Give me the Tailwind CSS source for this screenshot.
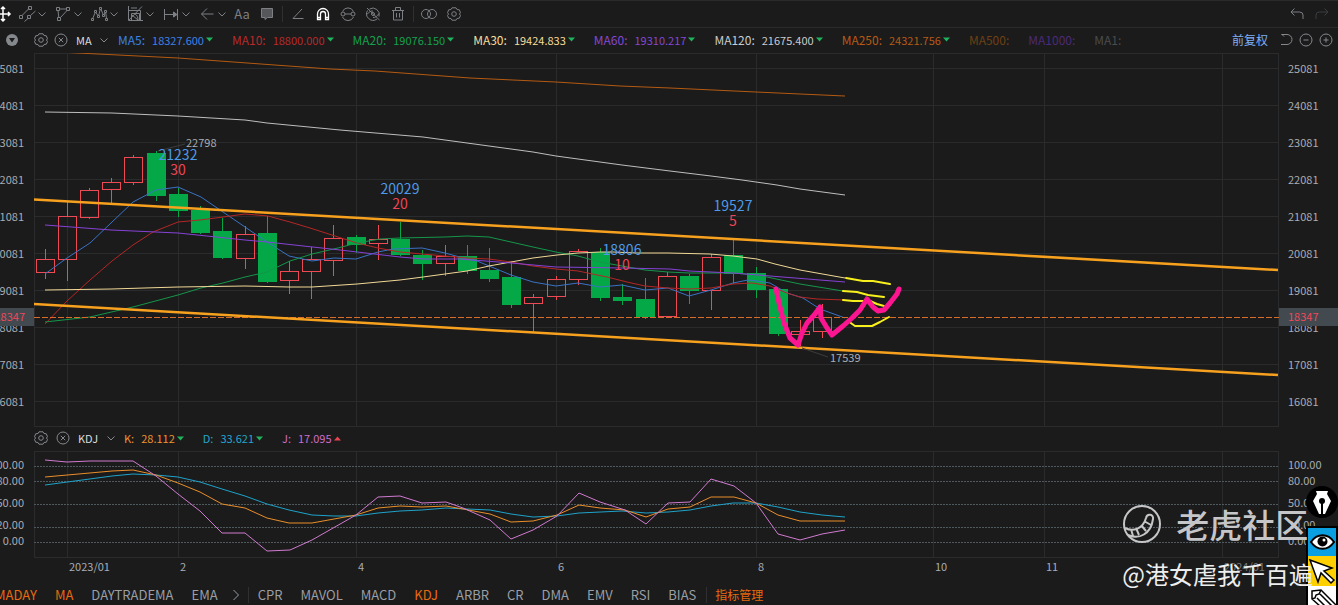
<!DOCTYPE html>
<html lang="zh-CN">
 <head>
  <meta charset="utf-8"/>
  <meta content="width=device-width, initial-scale=1.0" name="viewport"/>
  <title>K线图</title>
  <script src="https://cdn.jsdelivr.net/npm/@tailwindcss/browser@4"></script>
 </head>
 <body class="bg-[#1b1b1b] text-[#a8adb5] font-['Noto_Sans_CJK_SC','Open_Sans',sans-serif] text-[11px] leading-4">
  <!-- Shared icons -->
  <svg class="hidden">
   <symbol id="chev" viewBox="0 0 8 8"><path d="M.5 2.500l3.500 3.500 3.500-3.500" fill="none" stroke="currentColor"/></symbol>
   <symbol id="gear" viewBox="0 0 14 14"><g fill="none" stroke="currentColor"><path d="M5 .8h4l1 1.700 2.300.3 1.200 3L12.400 7l1.100 1.500-1.200 2.700-2.300.3-1 1.700H5l-1-1.700-2.300-.3L.5 8.500 1.600 7 .5 5.800l1.200-3L4 2.500z"/><circle cx="7" cy="7" r="2.300"/></g></symbol>
   <symbol id="close" viewBox="0 0 14 14"><g fill="none" stroke="currentColor"><circle cx="7" cy="7" r="6"/><path d="M4.800 4.800l4.400 4.400M9.200 4.800L4.800 9.200"/></g></symbol>
   <symbol id="down" viewBox="0 0 7 5"><path d="M0 0.500h7L3.500 4.500z" fill="#1fb45c"/></symbol>
   <symbol id="up" viewBox="0 0 7 5"><path d="M0 4.500h7L3.500.5z" fill="#e8434f"/></symbol>
  </svg>

  <div class="relative overflow-hidden">
   <!-- Toolbar -->
   <header class="flex h-7 items-center border-y border-[#2b2b2b] text-[#7c7f84]">
    <div class="-ml-[7px] flex items-center gap-[5px]">
     <button aria-label="移动" class="text-white"><svg class="h-5 w-5" viewBox="0 0 20 20" fill="none" stroke="currentColor" stroke-width="1.500"><path d="M10 3v14M3 10h14M8 5l2-2 2 2M8 15l2 2 2-2M15 8l2 2-2 2M5 8l-2 2 2 2"/></svg></button>
     <div class="flex items-center gap-2">
      <button aria-label="趋势线" class="flex items-center"><svg class="h-5 w-5" viewBox="0 0 20 20" fill="none" stroke="currentColor"><path d="M4.500 11l6.500-6.500M6.500 17.500l4-3.500M12.500 11.500l5-4.500M1.500 11.500h3v3h-3zM10.500 2.500h3v3h-3zM9.500 11.500h3v3h-3z"/></svg><svg class="h-2 w-2"><use href="#chev"/></svg></button>
      <button aria-label="图形" class="flex items-center"><svg class="h-5 w-5" viewBox="0 0 20 20" fill="none" stroke="currentColor"><path d="M2.500 3.500h3v3h-3zM12.500 3.500h3v3h-3zM3.500 13.500h3v3h-3zM5.500 5h7M4 6.500l.8 7M6.500 13.500l6.500-7"/></svg><svg class="h-2 w-2"><use href="#chev"/></svg></button>
      <button aria-label="波浪" class="flex items-center"><svg class="h-5 w-5" viewBox="0 0 20 20" fill="none" stroke="currentColor"><path d="M1.500 14.500h2v2h-2zM4.500 6.500h2v2h-2zM7.500 11.500h2v2h-2zM9.500 3.500h2v2h-2zM12.500 10.500h2v2h-2zM14.500 6.500h2v2h-2zM15.500 14.500h2v2h-2zM2.700 14.500l2.500-6M5.800 8.500l2.200 3M8.700 11.500l1.500-6M11 5.500l2.200 5M14 10.500l1.200-2M15.700 8.500l.8 6"/></svg><svg class="h-2 w-2"><use href="#chev"/></svg></button>
      <button aria-label="江恩" class="flex items-center"><svg class="h-5 w-5" viewBox="0 0 20 20" fill="none" stroke="currentColor"><path d="M2.500 2v14.500H17M5.500 9.500h8v7h-8zM3 16L16 2.500M3 6.500h11.500v10M5 4h6M9 10c2 1 3 3 3 6M6 11l6 5"/></svg><svg class="h-2 w-2"><use href="#chev"/></svg></button>
      <button aria-label="测量" class="flex items-center"><svg class="h-5 w-5" viewBox="0 0 20 20" fill="none" stroke="currentColor"><path d="M2.500 5v11M15.500 5v11M2.500 10.500h12"/><path d="M11.500 8v5l3.500-2.500z" fill="currentColor"/></svg><svg class="h-2 w-2"><use href="#chev"/></svg></button>
      <button aria-label="箭头" class="flex items-center"><svg class="h-5 w-5" viewBox="0 0 20 20" fill="none" stroke="currentColor"><path d="M3.500 10h12M9 4.500L3.500 10 9 15.500"/></svg><svg class="h-2 w-2"><use href="#chev"/></svg></button>
     </div>
    </div>
    <div class="ml-[6px] flex items-center gap-[5px]">
     <button class="w-5 text-[13px]">Aa</button>
     <button aria-label="批注"><svg class="block h-5 w-5" viewBox="0 0 20 20"><path d="M4.500 4.500h11v9h-5l-2.500 2v-2h-3.500z" fill="#55575b" stroke="currentColor"/></svg></button>
     <span class="h-4 w-px bg-[#303030]"></span>
     <button aria-label="角度"><svg class="block h-5 w-5" viewBox="0 0 20 20" fill="none" stroke="currentColor"><path d="M14 5L5 14.500h10.500"/></svg></button>
     <button aria-label="磁吸" class="text-white"><svg class="block h-5 w-5" viewBox="0 0 20 20" fill="none" stroke="currentColor" stroke-width="1.300"><path d="M4.500 15.500V10a5.500 5.500 0 0 1 11 0v5.500h-3V10a2.500 2.500 0 0 0-5 0v5.500zM4.500 13.500h3M12.500 13.500h3"/></svg></button>
     <button aria-label="连续绘制"><svg class="block h-5 w-5" viewBox="0 0 20 20" fill="none" stroke="currentColor"><path d="M4.500 7.500a6 6 0 0 1 11 0M4.500 13a6 6 0 0 0 11 0M7 10h6"/><circle cx="5" cy="10" r="2"/><circle cx="15" cy="10" r="2"/></svg></button>
     <button aria-label="隐藏绘图"><svg class="block h-5 w-5" viewBox="0 0 20 20" fill="none" stroke="currentColor"><path d="M6.500 5A6.500 6.500 0 0 1 16 12.500M4.500 6.500a6.500 6.500 0 0 0 9.500 8.500M4 10.500c2-3 4-3.500 6-3.500M16 9.500c-2 3-3.500 4-6 4M4 4l12.500 12"/><circle cx="10" cy="10" r="1.500"/></svg></button>
     <button aria-label="删除"><svg class="block h-5 w-5" viewBox="0 0 20 20" fill="none" stroke="currentColor"><path d="M4 6.500h12M7.500 6V3.500h5V6M5.500 6.500v9.500h9V6.500M8.500 9v4.500M11.500 9v4.500"/></svg></button>
     <span class="h-4 w-px bg-[#303030]"></span>
     <button aria-label="对比"><svg class="block h-5 w-5" viewBox="0 0 20 20" fill="none" stroke="currentColor"><circle cx="7" cy="10" r="4.500"/><circle cx="13" cy="10" r="4.500"/></svg></button>
     <button aria-label="设置" class="flex w-5 justify-center"><svg class="h-[14px] w-[14px]"><use href="#gear"/></svg></button>
    </div>
    <div class="ml-auto flex gap-1.5 pr-[5px]">
     <button aria-label="撤销"><svg class="block h-5 w-5" viewBox="0 0 20 20" fill="none" stroke="currentColor"><path d="M7.500 4.500L4 8l3.500 3.500M4 8h8.500q3.500 0 3.500 3v4"/></svg></button>
     <button aria-label="重做" class="text-[#3b3d40]"><svg class="block h-5 w-5" viewBox="0 0 20 20" fill="none" stroke="currentColor"><path d="M11.500 4.500L15 8l-3.500 3.500M15 8H6.500Q3 8 3 11v4"/></svg></button>
    </div>
   </header>

   <!-- MA legend -->
   <section class="flex h-[25px] items-center whitespace-nowrap px-[5px] pb-0.5">
    <button aria-label="收起"><svg class="block h-[14px] w-[14px]" viewBox="0 0 14 14"><circle cx="7" cy="7" r="6" fill="#85888d"/><path d="M4 5h6L7 9.500z" fill="#1b1b1b"/></svg></button>
    <button aria-label="指标设置" class="ml-[15px] text-[#85888d]"><svg class="block h-[14px] w-[14px]"><use href="#gear"/></svg></button>
    <button aria-label="关闭指标" class="ml-[6px] text-[#85888d]"><svg class="block h-[14px] w-[14px]"><use href="#close"/></svg></button>
    <select aria-label="主图指标" class="ml-2 w-6 appearance-none text-[11px] text-[#dcdcdc]"><option>MA</option></select>
    <svg class="h-2 w-2 text-[#85888d]"><use href="#chev"/></svg>
    <div class="ml-[10px] flex gap-[19px]">
     <div class="flex items-center text-[#3b82e6]"><span class="text-xs">MA5:</span><span class="ml-[7px] mr-0.5">18327.600</span><svg class="h-[5px] w-[7px]"><use href="#down"/></svg></div>
     <div class="flex items-center text-[#b82a2a]"><span class="text-xs">MA10:</span><span class="ml-[7px] mr-0.5">18800.000</span><svg class="h-[5px] w-[7px]"><use href="#down"/></svg></div>
     <div class="flex items-center text-[#14a04e]"><span class="text-xs">MA20:</span><span class="ml-[7px] mr-0.5">19076.150</span><svg class="h-[5px] w-[7px]"><use href="#down"/></svg></div>
     <div class="flex items-center text-[#f5dd9a]"><span class="text-xs">MA30:</span><span class="ml-[7px] mr-0.5">19424.833</span><svg class="h-[5px] w-[7px]"><use href="#down"/></svg></div>
     <div class="flex items-center text-[#8447d6]"><span class="text-xs">MA60:</span><span class="ml-[7px] mr-0.5">19310.217</span><svg class="h-[5px] w-[7px]"><use href="#down"/></svg></div>
     <div class="flex items-center text-[#c8ccd0]"><span class="text-xs">MA120:</span><span class="ml-[7px] mr-0.5">21675.400</span><svg class="h-[5px] w-[7px]"><use href="#down"/></svg></div>
     <div class="flex items-center text-[#b85a14]"><span class="text-xs">MA250:</span><span class="ml-[7px] mr-0.5">24321.756</span><svg class="h-[5px] w-[7px]"><use href="#down"/></svg></div>
     <span class="text-xs text-[#6e4014]">MA500:</span>
     <span class="text-xs text-[#4c2a78]">MA1000:</span>
     <span class="text-xs text-[#4a4b4d]">MA1:</span>
    </div>
    <a href="#" class="ml-auto text-xs text-[#7fb0f5]">前复权</a>
    <div class="ml-[11px] flex gap-[6px] text-[#85888d]">
     <button aria-label="还原"><svg class="block h-[14px] w-[14px]" viewBox="0 0 14 14" fill="none" stroke="currentColor"><path d="M2.500 1L5 3.500M2.500 1.500H8a5 5 0 0 1 0 10H2"/></svg></button>
     <button aria-label="缩小"><svg class="block h-[14px] w-[14px]" viewBox="0 0 14 14" fill="none" stroke="currentColor"><circle cx="7" cy="7" r="6"/><path d="M4.500 7h5"/></svg></button>
     <button aria-label="放大"><svg class="block h-[14px] w-[14px]" viewBox="0 0 14 14" fill="none" stroke="currentColor"><circle cx="7" cy="7" r="6"/><path d="M4.500 7h5M7 4.500v5"/></svg></button>
    </div>
   </section>

   <!-- Price chart -->
   <main class="relative flex">
    <div class="flex w-[34px] shrink-0 flex-col items-end gap-[21px] pr-[10px] pt-[7px]">
     <span>25081</span><span>24081</span><span>23081</span><span>22081</span><span>21081</span><span>20081</span><span>19081</span><span>18081</span><span>17081</span><span>16081</span>
    </div>
    <svg class="block h-auto min-w-0 flex-1" viewBox="34 53 1245 374" fill="none">
     <g stroke="#2a2b2c" shape-rendering="crispEdges">
      <path d="M34 53.500H1279M34 68.500H1279M34 105.500H1279M34 142.500H1279M34 179.500H1279M34 216.500H1279M34 253.500H1279M34 290.500H1279M34 327.500H1279M34 364.500H1279M34 401.500H1279M34 426.500H1279"/>
      <path d="M34.500 53V427M67.500 53V427M178.500 53V427M356.500 53V427M556.500 53V427M756.500 53V427M933.500 53V427M1044.500 53V427M1222.500 53V427M1278.500 53V427"/>
     </g>
     <g id="candles" shape-rendering="crispEdges"></g>
     <g stroke-linejoin="round">
      <polyline stroke="#b45a12" points="58,52 178,58 330,69 375,71 470,78 556,82 620,86 670,88 756,92 800,94 845,96"/>
      <polyline stroke="#bebebe" points="45,112 112,113 178,116 245,120 267,123 340,130 423,137 533,152 556,156 622,165 670,171 711,176 742,180 777,185 800,189 845,195"/>
      <polyline stroke="#3a72c4" points="45,274 67,258 90,243 111,223 133,202 156,190 178,187 201,197 223,212 245,227 267,242 289,256 312,261 334,258 356,259 378,252 393,249 422,248 445,253 467,259 477,261 511,275 533,282 556,286 578,283 600,287 622,285 645,290 668,288 689,296 711,290 733,283 748,280 757,281 770,283 787,293 803,298 820,309 845,318"/>
      <polyline stroke="#b42626" points="45,324 67,301 90,280 112,261 133,245 153,232 178,222 200,220 223,217 245,214 268,216 290,222 310,228 335,236 357,243 378,248 400,252 422,254 445,256 467,258 489,259 511,262 533,266 556,269 578,271 607,277 627,282 645,286 668,288 689,289 711,288 733,284 752,283 770,286 787,293 800,297 817,299 845,300"/>
      <polyline stroke="#14964a" points="45,322 90,317 133,307 178,295 201,288 223,283 245,277 267,272 290,261 312,254 338,248 357,243 380,239 400,238 445,237 467,236 489,237 511,242 533,247 556,252 578,256 600,262 622,266 645,270 668,272 689,273 733,273 757,275 767,277 800,284 843,291"/>
      <polyline stroke="#f0d896" points="45,290 111,289 178,287 245,286 289,287 312,287 357,284 400,280 423,277 445,274 467,271 489,266 511,262 533,258 557,255 578,253 600,252 613,252 637,253 668,253 710,254 733,256 757,259 775,264 800,270 845,278"/>
      <polyline stroke="#8642d6" points="45,225 111,230 178,233 245,240 267,242 340,250 400,257 423,259 460,259 511,263 556,267 622,268 670,269 689,271 733,273 770,276 845,282"/>
     </g>
     <path d="M34 317.500H1279" stroke="#d86c28" stroke-dasharray="6 2" shape-rendering="crispEdges"/>
     <path d="M34 199.500L1278 270M34 304L1278 375" stroke="#f7a11e" stroke-width="2.500"/>
     <path d="M158 151L185 144M802 348L828 357" stroke="#3a3c3e"/>
     <!-- Count signals -->
     <g font-size="14" text-anchor="middle" fill="#4d9ae8">
      <text x="178" y="160">21232</text><text x="400" y="194">20029</text><text x="622" y="255">18806</text><text x="733" y="211">19527</text>
     </g>
     <g font-size="14" text-anchor="middle" fill="#ef4453">
      <text x="178" y="175">30</text><text x="400" y="209">20</text><text x="622" y="270">10</text><text x="733" y="226">5</text>
     </g>
     <g font-size="11" fill="#a8adb5"><text x="186" y="147">22798</text><text x="830" y="362">17539</text></g>
     <!-- Hand drawn forecast -->
     <g stroke="#f8f01c" stroke-width="2" stroke-linejoin="round" stroke-linecap="round">
      <path d="M846 278L863 281 873 281 890 284M843 291L857 292 868 295 884 297M843 300L853 301 870 301 877 304 884 306M848 321L855 326H872L880 322 889 317"/>
     </g>
     <path d="M776 289L779 303 784 323 790 338 798 345 802 333 807 323 815 314 820 307 821 318 827 328 832 335 843 326 852 318 860 310 867 299 873 307 878 311 884 310 890 303 897 294 899 289" stroke="#fc1591" stroke-width="5" stroke-linejoin="round" stroke-linecap="round"/>
    </svg>
    <div class="flex w-[59px] shrink-0 flex-col gap-[21px] pl-[9px] pt-[7px]">
     <span>25081</span><span>24081</span><span>23081</span><span>22081</span><span>21081</span><span>20081</span><span>19081</span><span>18081</span><span>17081</span><span>16081</span>
    </div>
    <!-- Last price tags -->
    <div class="absolute left-0 top-[255px] flex h-[18px] w-[34px] items-center justify-end bg-[#42494f] pb-0.5 pr-[9px] text-[#f0485a]">18347</div>
    <div class="absolute right-0 top-[255px] flex h-[18px] w-[59px] items-center bg-[#42494f] pb-0.5 pl-[9px] text-[#f0485a]">18347</div>
   </main>

   <!-- KDJ legend -->
   <section class="flex h-6 items-center whitespace-nowrap pb-0.5 pl-[34px]">
    <button aria-label="指标设置" class="text-[#85888d]"><svg class="block h-[14px] w-[14px]"><use href="#gear"/></svg></button>
    <button aria-label="关闭指标" class="ml-2 text-[#85888d]"><svg class="block h-[14px] w-[14px]"><use href="#close"/></svg></button>
    <select aria-label="副图指标" class="ml-2 w-[29px] appearance-none text-[11px] text-[#dcdcdc]"><option>KDJ</option></select>
    <svg class="h-2 w-2 text-[#85888d]"><use href="#chev"/></svg>
    <div class="ml-[9px] flex gap-[19px]">
     <div class="flex items-center text-[#f0932c]"><span>K:</span><span class="ml-[7px] mr-0.5">28.112</span><svg class="h-[5px] w-[7px]"><use href="#down"/></svg></div>
     <div class="flex items-center text-[#22a6cc]"><span>D:</span><span class="ml-[7px] mr-0.5">33.621</span><svg class="h-[5px] w-[7px]"><use href="#down"/></svg></div>
     <div class="flex items-center text-[#cf6cc8]"><span>J:</span><span class="ml-[7px] mr-0.5">17.095</span><svg class="h-[5px] w-[7px]"><use href="#up"/></svg></div>
    </div>
   </section>

   <!-- KDJ chart -->
   <section class="flex">
    <div class="flex w-[34px] shrink-0 flex-col items-end pr-[10px] pt-[5px]">
     <span>100.00</span><span>80.00</span><span class="my-[6px]">50.00</span><span>20.00</span><span>0.00</span>
    </div>
    <svg class="block h-auto min-w-0 flex-1" viewBox="34 451 1245 126" fill="none">
     <path d="M34 451.500H1279M34 557.500H1279M34.500 451V557M67.500 451V557M178.500 451V557M356.500 451V557M556.500 451V557M756.500 451V557M933.500 451V557M1044.500 451V557M1222.500 451V557M1278.500 451V557" stroke="#2a2b2c"/>
     <path d="M34 466.500H1279M34 481.500H1279M34 504.500H1279M34 527.500H1279M34 542.500H1279" stroke="#505a5e" stroke-dasharray="2 1"/>
     <g stroke-linejoin="round">
      <polyline stroke="#1ea2ca" points="45,485 112,476 133,474 156,475 178,477 200,482 222,489 245,496 267,504 289,510 312,515 334,516 356,516 378,513 400,511 422,510 446,508 467,509 490,510 511,514 533,517 557,516 579,513 622,511 646,513 668,512 690,510 711,506 733,503 756,503 778,507 800,512 822,515 845,517"/>
      <polyline stroke="#ea8e2a" points="45,477 112,471 133,470 156,475 178,483 200,492 222,504 245,508 267,518 289,523 312,523 334,519 356,515 378,508 400,506 422,507 446,506 463,509 490,514 511,522 533,521 557,515 579,505 600,508 625,510 646,517 668,509 690,507 711,497 734,497 756,503 778,515 800,521 845,521"/>
      <polyline stroke="#d07ad0" points="45,460 67,462 90,461 133,461 156,476 178,494 200,511 222,533 245,533 267,551 290,550 312,540 356,515 378,497 400,496 422,503 446,502 463,508 490,520 511,539 533,530 557,516 579,493 600,502 625,510 646,524 668,503 690,502 711,479 734,486 756,503 778,534 800,540 822,534 845,530"/>
     </g>
     <g font-size="11" fill="#a8adb5">
      <text x="69" y="571">2023/01</text><text x="180" y="571">2</text><text x="358" y="571">4</text><text x="558" y="571">6</text><text x="758" y="571">8</text><text x="935" y="571">10</text><text x="1046" y="571">11</text><text x="1224" y="571" fill="#74777b">2024/01</text>
     </g>
    </svg>
    <div class="flex w-[59px] shrink-0 flex-col pl-[9px] pt-[5px]">
     <span>100.00</span><span>80.00</span><span class="my-[6px]">50.00</span><span>20.00</span><span>0.00</span>
    </div>
   </section>

   <!-- Indicator tabs -->
   <nav class="mt-[8px] flex h-5 items-center gap-[18px] whitespace-nowrap text-[13px] text-[#9a9ea5]">
    <button class="-ml-[5px] text-[#e8690f]">MADAY</button>
    <button class="text-[#e8690f]">MA</button>
    <button>DAYTRADEMA</button>
    <button>EMA</button>
    <div class="-ml-1 flex items-center gap-2"><button aria-label="更多"><svg class="block h-3 w-2" viewBox="0 0 8 12" fill="none" stroke="currentColor"><path d="M1.500 1l5 5-5 5"/></svg></button><span class="h-4 w-px bg-[#303030]"></span></div>
    <button class="-ml-[9px]">CPR</button>
    <button>MAVOL</button>
    <button>MACD</button>
    <button class="text-[#e8690f]">KDJ</button>
    <button>ARBR</button>
    <button>CR</button>
    <button>DMA</button>
    <button>EMV</button>
    <button>RSI</button>
    <button>BIAS</button>
    <div class="-ml-2 flex items-center gap-2"><span class="h-4 w-px bg-[#303030]"></span><button class="text-xs text-[#e8690f]">指标管理</button></div>
   </nav>

   <!-- Floating pen tools -->
   <div class="absolute -bottom-[13px] right-0 flex w-8 flex-col items-end">
    <button aria-label="画笔" class="mb-2"><svg class="block h-8 w-8" viewBox="0 0 32 32"><circle cx="16" cy="16" r="16" fill="#000"/><path d="M10 5h12l-1 3 4 7-6 13h-6L7 15l4-7z" fill="#fff"/><path d="M16 15v13" stroke="#000" stroke-width="2"/><circle cx="16" cy="15" r="3" fill="#000"/></svg></button>
    <button aria-label="显示" class="border-x-2 border-t-2 border-black bg-[#0a9fe0]"><svg class="block h-7 w-7" viewBox="0 0 28 28"><path d="M3 14c6-9 17-9 23 0-6 9-17 9-23 0z" fill="#fff" stroke="#000" stroke-width="2"/><circle cx="14.500" cy="13.500" r="5" fill="#000"/><circle cx="16" cy="12" r="1.500" fill="#fff"/></svg></button>
    <button aria-label="选择" class="border-x-2 border-black bg-[#ffd000]"><svg class="block h-[30px] w-7" viewBox="0 0 28 30"><path d="M2 4l22 8-8 3 10 9-3 3-10-10-3 9z" fill="#fff" stroke="#000" stroke-width="1.500"/></svg></button>
    <button aria-label="铅笔" class="border-x-2 border-black bg-white"><svg class="block h-8 w-7" viewBox="0 0 28 32" fill="none" stroke="#000" stroke-width="1.500"><path d="M4 5l9-1 16 16-8 8L4 13zM4 13l3-1 1-3 3-1 2-4M9 12l14 14M12 8l15 15"/></svg></button>
   </div>

   <!-- Watermark -->
   <div class="pointer-events-none absolute bottom-[14px] right-[25px] flex flex-col gap-[9px] whitespace-nowrap">
    <div class="flex items-center gap-3.5 text-[33px] font-medium leading-[48px] text-[#c6c6c8]">
     <svg class="h-10 w-10" viewBox="0 0 40 40" fill="none" stroke="currentColor" stroke-width="2"><circle cx="20" cy="20" r="18"/><path d="M3 24c8 4 18 1 21-10 1-5 8-4 7 1C29 30 17 36 6 31M9 25l2 7M14 24l3 7M19 21l5 6M22 17l7 4"/></svg>
     <span>老虎社区</span>
    </div>
    <div class="text-2xl leading-[34px] text-[#eeeeee]">@港女虐我千百遍</div>
   </div>
  </div>

  <script>
    // [x, top, bottom, high, low, up]
    const candles = [
      [45, 259, 272, 249, 279, 1], [67, 216, 259, 202, 281, 1], [89, 190, 217, 188, 219, 1],
      [111, 182, 189, 178, 203, 1], [133, 157, 182, 155, 185, 1], [156, 153, 196, 151, 201, 0],
      [178, 194, 211, 188, 217, 0], [200, 210, 233, 206, 234, 0], [222, 231, 258, 218, 259, 0],
      [245, 234, 258, 226, 269, 1], [267, 233, 282, 216, 283, 0], [289, 271, 280, 261, 294, 1],
      [311, 259, 271, 247, 299, 1], [333, 238, 260, 225, 276, 1], [356, 237, 245, 235, 253, 0],
      [378, 239, 243, 225, 260, 1], [400, 239, 255, 222, 256, 0], [422, 255, 264, 250, 280, 0],
      [445, 256, 263, 245, 276, 1], [467, 256, 271, 245, 274, 0], [489, 270, 279, 248, 282, 0],
      [511, 277, 305, 262, 308, 0], [533, 297, 303, 294, 333, 1], [556, 279, 296, 276, 300, 1],
      [578, 251, 279, 249, 285, 1], [600, 252, 298, 248, 301, 0], [622, 297, 301, 284, 305, 0],
      [645, 299, 317, 278, 319, 0], [667, 276, 316, 272, 316, 1], [689, 276, 291, 274, 304, 0],
      [711, 257, 290, 254, 310, 1], [733, 255, 274, 240, 284, 0], [756, 273, 290, 267, 298, 0],
      [778, 289, 334, 289, 336, 0], [800, 331, 334, 320, 346, 1], [822, 317, 331, 304, 338, 1]
    ];
    let out = "";
    candles.forEach(([x, top, bottom, high, low, up]) => {
      const cx = x + 0.5;
      if (up) {
        out += `<path stroke="#ee4a55" d="M${cx} ${high}V${top}M${cx} ${bottom}V${low}"/>`;
        out += `<rect stroke="#ee4a55" x="${cx - 9}" y="${top + 0.5}" width="18" height="${bottom - top}"/>`;
      } else {
        out += `<path stroke="#05a846" d="M${cx} ${high}V${low}"/>`;
        out += `<rect fill="#05a846" x="${x - 9}" y="${top}" width="19" height="${bottom - top}"/>`;
      }
    });
    document.getElementById("candles").innerHTML = out;
  </script>
 </body>
</html>
